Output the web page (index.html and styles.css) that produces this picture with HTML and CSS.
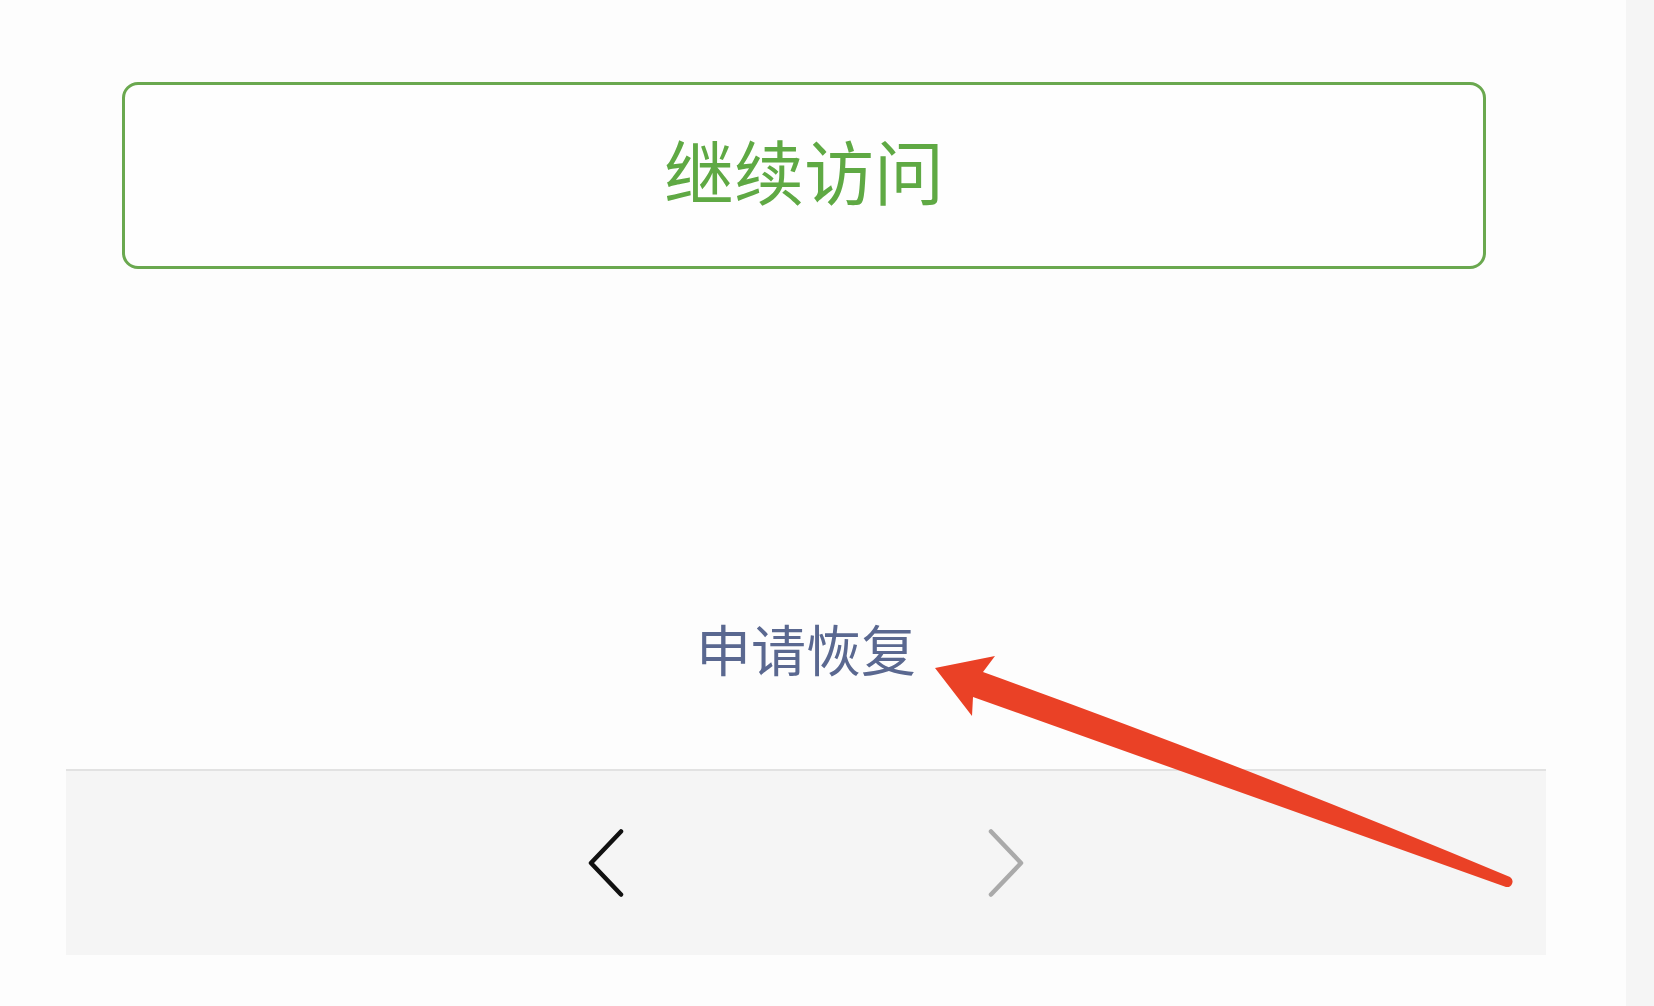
FILE: index.html
```html
<!DOCTYPE html>
<html lang="zh-CN">
<head>
<meta charset="utf-8">
<title>继续访问</title>
<link rel="stylesheet" href="styles.css">
</head>
<body>
<div class="page">
  <main class="main">
    <div class="btn-wrap">
      <div class="btn">继续访问</div>
    </div>
    <div class="restore">申请恢复</div>
    <nav class="bar">
      <svg class="chev" width="36" height="68" viewBox="0 0 36 68"><path d="M33 2.5 L3 34 L33 65.5" fill="none" stroke="#111" stroke-width="4.5" stroke-linecap="round" stroke-linejoin="round"/></svg>
      <svg class="chev" width="36" height="68" viewBox="0 0 36 68"><path d="M3 2.5 L33 34 L3 65.5" fill="none" stroke="#aaaaaa" stroke-width="4.5" stroke-linecap="round" stroke-linejoin="round"/></svg>
    </nav>
  </main>
  <aside class="aside"></aside>
  <svg class="arrow" width="1654" height="1006" viewBox="0 0 1654 1006"><path d="M935 668 L995 656 L983 672 Q1258 771 1510 877 A5.5 5.5 0 0 1 1506 887 L973 697 L972 716 Z" fill="#ea4126"/></svg>
</div>
</body>
</html>
```
FILE: styles.css
```css
html, body {
  margin: 0;
  padding: 0;
}
body {
  background: #fdfdfd;
  font-family: "Noto Sans CJK SC", "Noto Sans", sans-serif;
}
.page {
  position: relative;
  display: flex;
  height: 1006px;
  overflow: hidden;
}
.main {
  width: 1480px;
  margin-left: 66px;
  display: flex;
  flex-direction: column;
}
.aside {
  margin-left: auto;
  width: 28px;
  background: #f5f5f5;
}
.btn-wrap {
  padding: 82px 60px 0 56px;
}
.btn {
  box-sizing: border-box;
  height: 187px;
  padding-bottom: 12px;
  border: 3px solid #6aa84f;
  border-radius: 16px;
  display: flex;
  align-items: center;
  justify-content: center;
  color: #5fa944;
  font-size: 70px;
  line-height: 1;
  background: #fefefe;
}
.restore {
  margin-top: 328px;
  height: 100px;
  line-height: 100px;
  text-align: center;
  font-size: 55px;
  color: #5a6890;
}
.bar {
  margin-top: 72px;
  box-sizing: border-box;
  height: 186px;
  border-top: 2px solid #e2e2e2;
  background: #f5f5f5;
  display: flex;
  align-items: center;
  justify-content: center;
  gap: 364px;
}
.chev {
  display: block;
}
.arrow {
  position: absolute;
  top: 0;
  left: 0;
  pointer-events: none;
}
```
